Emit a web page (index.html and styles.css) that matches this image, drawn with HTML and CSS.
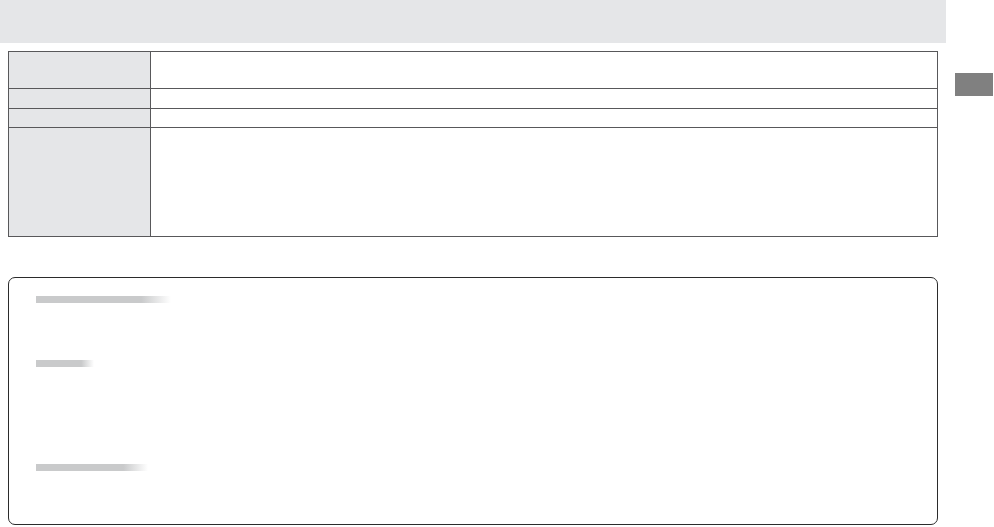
FILE: index.html
```html
<!DOCTYPE html>
<html>
<head>
<meta charset="utf-8">
<link rel="stylesheet" href="styles.css">
</head>
<body>
<div class="page">
  <main class="main">
    <header class="banner"></header>
    <div class="spec">
      <div class="cell head r1"></div><div class="cell r1"></div>
      <div class="cell head"></div><div class="cell"></div>
      <div class="cell head"></div><div class="cell"></div>
      <div class="cell head"></div><div class="cell"></div>
    </div>
    <section class="notes">
      <div class="bar bar-1"></div>
      <div class="bar bar-2"></div>
      <div class="bar bar-3"></div>
    </section>
  </main>
  <aside class="side">
    <div class="tab"></div>
  </aside>
</div>
</body>
</html>
```
FILE: styles.css
```css
html, body {
  margin: 0;
  padding: 0;
  background: #fff;
  font-family: "Liberation Sans", Arial, sans-serif;
}
.page {
  display: flex;
  width: 994px;
  height: 527px;
  overflow: hidden;
}
.main {
  width: 946px;
  flex: none;
  display: flex;
  flex-direction: column;
}
.banner {
  height: 43px;
  background: #e5e6e8;
}
.spec {
  margin: 8px 0 0 8px;
  width: 928px;
  display: grid;
  grid-template-columns: 141px 1fr;
  grid-template-rows: 36px 19px 18px 108px;
  gap: 1px;
  padding: 1px;
  background: #58585a;
}
.cell {
  background: #fff;
}
.cell.head {
  background: #e5e6e8;
}
.notes {
  box-sizing: border-box;
  margin: 40px 0 0 8px;
  width: 930px;
  height: 248px;
  border: 1px solid #2b2b2b;
  border-radius: 7px;
  padding: 18px 0 0 27px;
  display: flex;
  flex-direction: column;
  align-items: flex-start;
}
.bar {
  height: 7px;
  background: linear-gradient(to right, #c9cacb 0%, #c9cacb 78%, #ffffff 100%);
}
.bar-1 { width: 135px; }
.bar-2 { width: 58px; margin-top: 57px; }
.bar-3 { width: 112px; margin-top: 97px; }
.side {
  flex: none;
  padding: 73px 0 0 9px;
}
.tab {
  width: 38px;
  height: 23px;
  background: #808080;
}
```
